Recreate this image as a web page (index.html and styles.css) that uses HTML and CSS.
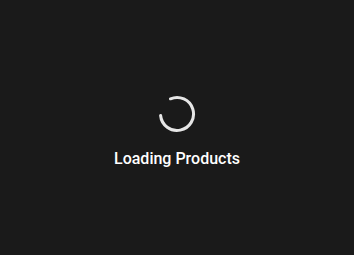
FILE: index.html
```html
<!DOCTYPE html>
<html lang="en">
<head>
<meta charset="utf-8">
<title>Loading Products</title>
<link rel="stylesheet" href="styles.css">
</head>
<body>
<main class="loader">
  <svg class="spinner" width="38" height="38" viewBox="0 0 38 38" aria-hidden="true">
    <path d="M 12.5 3.8 A 16.5 16.5 0 1 1 2.6 20.5" fill="none" stroke="#e6e6e6" stroke-width="3" stroke-linecap="round"/>
  </svg>
  <p class="label">Loading Products</p>
</main>
</body>
</html>
```
FILE: styles.css
```css
html, body {
  margin: 0;
  height: 100%;
}
body {
  background: #1a1a1a;
  font-family: Roboto, "Liberation Sans", sans-serif;
  color: #ffffff;
}
.loader {
  height: 100%;
  box-sizing: border-box;
  padding-top: 9px;
  display: flex;
  flex-direction: column;
  align-items: center;
  justify-content: center;
  gap: 16px;
}
.spinner {
  display: block;
}
.label {
  margin: 0;
  font-size: 16px;
  line-height: 20px;
  font-weight: 500;
}
```
